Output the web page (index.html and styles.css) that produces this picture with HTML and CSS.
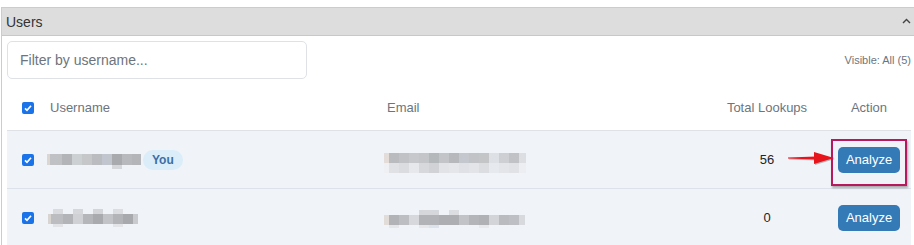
FILE: index.html
```html
<!DOCTYPE html>
<html>
<head>
<meta charset="utf-8">
<link rel="stylesheet" href="styles.css">
</head>
<body>
<div class="panel">
  <div class="panel-head">
    <span class="title">Users</span>
    <svg class="chev" width="9" height="6" viewBox="0 0 9 6"><polyline points="1,5 4.5,1.5 8,5" fill="none" stroke="#444" stroke-width="1.4"/></svg>
  </div>
  <div class="panel-body">
    <div class="toolbar">
      <input class="filter" type="text" placeholder="Filter by username...">
      <span class="visible">Visible: All (5)</span>
    </div>
    <div class="table">
      <div class="row head">
        <div class="cell check"><svg class="cb" width="12" height="12" viewBox="0 0 12 12"><rect width="12" height="12" rx="2" fill="#1a73e8"/><polyline points="3,6.3 5,8.3 9,3.8" fill="none" stroke="#fff" stroke-width="1.7"/></svg></div>
        <div class="cell user">Username</div>
        <div class="cell email">Email</div>
        <div class="cell lookups">Total Lookups</div>
        <div class="cell action">Action</div>
      </div>
      <div class="row">
        <div class="cell check"><svg class="cb" width="12" height="12" viewBox="0 0 12 12"><rect width="12" height="12" rx="2" fill="#1a73e8"/><polyline points="3,6.3 5,8.3 9,3.8" fill="none" stroke="#fff" stroke-width="1.7"/></svg></div>
        <div class="cell user"><span class="mz mz-u1"></span><span class="badge">You</span></div>
        <div class="cell email"><span class="mz mz-e1"></span></div>
        <div class="cell lookups num">56</div>
        <div class="cell action">
          <svg class="arrow" width="48" height="16" viewBox="0 0 48 16"><polygon points="0,7.4 28,6.4 28,9.6 0,8.6" fill="#e8141b"/><polygon points="26,2 46,8 26,14" fill="#e8141b"/></svg>
          <span class="hl"></span>
          <button class="btn">Analyze</button>
        </div>
      </div>
      <div class="row">
        <div class="cell check"><svg class="cb" width="12" height="12" viewBox="0 0 12 12"><rect width="12" height="12" rx="2" fill="#1a73e8"/><polyline points="3,6.3 5,8.3 9,3.8" fill="none" stroke="#fff" stroke-width="1.7"/></svg></div>
        <div class="cell user"><span class="mz mz-u2"></span></div>
        <div class="cell email"><span class="mz mz-e2"></span></div>
        <div class="cell lookups num">0</div>
        <div class="cell action"><button class="btn">Analyze</button></div>
      </div>
    </div>
  </div>
</div>
</body>
</html>
```

FILE: styles.css
```css
html, body {
  margin: 0;
  padding: 0;
  background: #fff;
  overflow: hidden;
  font-family: "Liberation Sans", Arial, sans-serif;
}

.panel {
  margin: 7px 0 0 1px;
  width: 916px;
  border: 1px solid #cccccc;
  box-sizing: border-box;
}

.panel-head {
  height: 27px;
  background: #dddddd;
  border-bottom: 1px solid #c8c8c8;
  display: flex;
  align-items: center;
  justify-content: space-between;
  padding: 0 5px 0 4px;
  color: #333;
  font-size: 14px;
}

.chev { margin-top: -2px; }

.panel-body {
  padding: 5px 5px 0 5px;
}

.toolbar {
  display: flex;
  align-items: center;
  justify-content: space-between;
}

.filter {
  width: 300px;
  height: 38px;
  box-sizing: border-box;
  border: 1px solid #dee2e6;
  border-radius: 5px;
  padding: 0 12px;
  font-family: "Liberation Sans", Arial, sans-serif;
  font-size: 14px;
  color: #333;
  outline: none;
}
.filter::placeholder { color: #6c757d; }

.visible {
  font-size: 11px;
  color: #6c757d;
}

.table {
  margin-top: 6px;
}

.row {
  display: grid;
  grid-template-columns: 36px 337px 337px 100px 94px;
  height: 57px;
  background: #f0f3f8;
  border-bottom: 1px solid #dde2ea;
  align-items: center;
  font-size: 13px;
  color: #212529;
}

.row.head {
  height: 45px;
  background: #fff;
  color: #6c757d;
  border-bottom: 1px solid #dee2e6;
}

.cell { display: flex; align-items: center; }
.check { padding-left: 15px; }
.cb { display: block; }
.user { padding-left: 7px; }
.email { padding-left: 7px; }
.lookups { justify-content: center; }
.action {
  justify-content: center;
  padding-left: 10px;
  position: relative;
  height: 100%;
}

.badge {
  margin-left: 2px;
  height: 20px;
  padding: 0 9px;
  border-radius: 10px;
  background: #daedf8;
  color: #3c6ea6;
  font-weight: bold;
  font-size: 12px;
  display: inline-flex;
  align-items: center;
}

.btn {
  height: 26px;
  padding: 0 8px;
  border: none;
  border-radius: 5px;
  background: #337ab7;
  color: #fff;
  font-family: "Liberation Sans", Arial, sans-serif;
  font-size: 13px;
  line-height: 26px;
}

.hl {
  position: absolute;
  left: 14px;
  top: 8px;
  width: 76px;
  height: 47px;
  box-sizing: border-box;
  border: 2px solid #b8195c;
  box-shadow: 1px 2px 2px rgba(0, 0, 0, 0.3);
}

.arrow {
  position: absolute;
  left: -29px;
  top: 19px;
  filter: drop-shadow(1px 1px 0.6px rgba(0, 0, 0, 0.25));
}

.mz { display: inline-block; }

.mz-u1 {
  margin-left: -3px;
  width: 94px;
  height: 16px;
  background:
    linear-gradient(#d6d7da, #d6d7da) 65px 11px / 10px 4px no-repeat,
    linear-gradient(to right,
      #dcd6d3 0 3px, #c0c1c4 3px 15px, #b3b4b7 15px 25px, #cdd0d3 25px 35px,
      #c6c7c9 35px 45px, #bbbcbf 45px 55px, #c1c5cd 55px 65px, #a9aaad 65px 75px,
      #b8b9bc 75px 85px, #b4b5b8 85px 94px) 0 0 / 94px 11px no-repeat;
  margin-top: 5px;
}

.mz-u2 {
  margin-left: -2px;
  width: 90px;
  height: 18px;
  background:
    linear-gradient(to right,
      transparent 0 5px, #dadbde 5px 15px, transparent 15px 25px, #d6d7da 25px 35px,
      transparent 35px 45px, #d4d5d8 45px 55px, transparent 55px 65px, #dcdde0 65px 75px, transparent 75px) 0 0 / 90px 5px no-repeat,
    linear-gradient(to right,
      #d8d4d2 0 3px, #bcbdc0 3px 15px, #b3b4b7 15px 25px, #d0d1d4 25px 35px,
      #b5b6b9 35px 45px, #a9aaad 45px 55px, #c2c3c6 55px 65px, #b3b4b7 65px 75px,
      #a8a9ac 75px 85px, #c9cacd 85px 90px) 0 5px / 90px 10px no-repeat,
    linear-gradient(to right,
      transparent 0 5px, #e2e3e6 5px 15px, transparent 15px 65px, #e3e4e7 65px 75px, transparent 75px) 0 15px / 90px 3px no-repeat;
}

.mz-e1 {
  margin-left: -3px;
  width: 142px;
  height: 20px;
  margin-top: 6px;
  background:
    linear-gradient(to right,
      #e3dcd8 0 5px, #b9bbbf 5px 15px, #c0c2c5 15px 25px, #c6c8cb 25px 35px,
      #c3c5c8 35px 45px, #b5b8bb 45px 55px, #c2c4c7 55px 65px, #b6b8bb 65px 75px,
      #c4c7ce 75px 85px, #c1c3c6 85px 95px, #c4c5c7 95px 105px, #dde0e5 105px 115px,
      #cdcfd2 115px 125px, #c0c2c5 125px 135px, #dcdee2 135px 142px) 0 0 / 142px 10px no-repeat,
    linear-gradient(to right,
      #eef0f3 0 5px, #dfe1e5 5px 15px, #dadce0 15px 25px, #e6e8eb 25px 35px,
      #d6d8dc 35px 45px, #d0d2d6 45px 55px, #e1e3e7 55px 65px, #e4e6e9 65px 75px,
      #dfe1e6 75px 85px, #e2e4e8 85px 95px, #dcdde0 95px 105px, #e6e9ee 105px 115px,
      #e3e5e9 115px 125px, #e0e2e6 125px 135px, #eceef1 135px 142px) 0 10px / 142px 10px no-repeat;
}

.mz-e2 {
  margin-left: -3px;
  width: 141px;
  height: 18px;
  margin-top: 2px;
  background:
    linear-gradient(to right,
      transparent 0 35px, #d6d7da 35px 55px, transparent 55px 65px, #dcdde0 65px 75px, transparent 75px) 0 0 / 141px 5px no-repeat,
    linear-gradient(to right,
      #e2dcd8 0 5px, #b1b3b6 5px 15px, #bcbec1 15px 25px, #d6d8db 25px 35px,
      #b2b3b6 35px 55px, #adaeb1 55px 75px, #c1c3c6 75px 85px, #b4b5b8 85px 95px,
      #b0b1b4 95px 105px, #d3d4d7 105px 115px, #babbbe 115px 125px, #bdbfc5 125px 135px,
      #d8d9dc 135px 141px) 0 5px / 141px 10px no-repeat,
    linear-gradient(to right,
      transparent 0 5px, #e4e6ea 5px 15px, transparent 15px 35px, #e6e7ea 35px 45px,
      #dde3ec 45px 55px, transparent 55px 95px, #e8e9ec 95px 105px, transparent 105px) 0 15px / 141px 3px no-repeat;
}
```
